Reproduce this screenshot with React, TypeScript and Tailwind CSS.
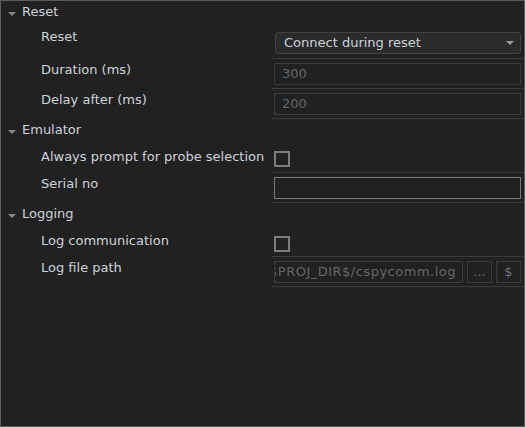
import React from "react";

const font = { fontFamily: '"DejaVu Sans", "Liberation Sans", sans-serif' };

function Header({ title, h }: { title: string; h: string }) {
  return (
    <div className={`flex ${h} items-start pt-[2px]`}>
      <div className="flex w-[21px] justify-start pl-[7px] pt-[9px]">
        <div className="h-0 w-0 border-x-[4px] border-t-[4px] border-x-transparent border-t-[#8a8a8a]" />
      </div>
      <span className="text-[13px] leading-[18px] text-[#ccd3da]">{title}</span>
    </div>
  );
}

function Row({
  label,
  h,
  lp,
  cp,
  children,
}: {
  label: string;
  h: string;
  lp: string;
  cp: string;
  children: React.ReactNode;
}) {
  return (
    <div className={`flex ${h}`}>
      <div
        className={`w-[270px] shrink-0 whitespace-nowrap pl-[40px] ${lp} text-[13px] leading-[18px] text-[#ccd3da]`}
      >
        {label}
      </div>
      <div className={`flex-1 border-b border-[#3a3a3a] ${cp} pl-[3px] pr-[3px]`}>
        {children}
      </div>
    </div>
  );
}

function DisabledInput({ value }: { value: string }) {
  return (
    <div className="flex h-[22px] items-center border border-[#3a3a3a] bg-[#212121] pl-[7px] text-[13px] text-[#676767]">
      {value}
    </div>
  );
}

function Checkbox() {
  return <div className="h-[16px] w-[16px] border-[2px] border-[#7d7d7d]" />;
}

export default function App() {
  return (
    <div
      style={font}
      className="h-[427px] w-[525px] overflow-hidden border border-[#5c5c5c] bg-[#212121]"
    >
      <Header title="Reset" h="h-[28px]" />
      <Row label="Reset" h="h-[30px]" lp="-mt-[1px]" cp="pt-[3px]">
        <div className="ml-[1px] flex h-[22px] items-center justify-between rounded-[3px] border border-[#444444] bg-[#2b2b2b] pl-[8px] pr-[6px] text-[13px] text-[#ccd3da]">
          <span>Connect during reset</span>
          <div className="h-0 w-0 border-x-[4px] border-t-[4px] border-x-transparent border-t-[#9a9a9a]" />
        </div>
      </Row>
      <Row label="Duration (ms)" h="h-[30px]" lp="pt-[2px]" cp="pt-[4px]">
        <DisabledInput value="300" />
      </Row>
      <Row label="Delay after (ms)" h="h-[30px]" lp="pt-[2px]" cp="pt-[4px]">
        <DisabledInput value="200" />
      </Row>
      <Header title="Emulator" h="h-[28px]" />
      <Row label="Always prompt for probe selection" h="h-[26px]" lp="pt-[1px]" cp="pt-[4px]">
        <Checkbox />
      </Row>
      <Row label="Serial no" h="h-[30px]" lp="pt-[2px]" cp="pt-[4px]">
        <div className="h-[22px] border border-[#7a7a7a] bg-[#212121]" />
      </Row>
      <Header title="Logging" h="h-[29px]" />
      <Row label="Log communication" h="h-[25px]" lp="pt-[0px]" cp="pt-[4px]">
        <Checkbox />
      </Row>
      <Row label="Log file path" h="h-[30px]" lp="pt-[2px]" cp="pt-[4px]">
        <div className="flex gap-[4px]">
          <div className="flex h-[22px] w-[189px] items-center justify-end overflow-hidden whitespace-nowrap border border-[#3a3a3a] bg-[#212121] pr-[6px] text-[13px] tracking-[0.5px] text-[#676767]">
            <span className="shrink-0">$PROJ_DIR$/cspycomm.log</span>
          </div>
          <div className="flex h-[22px] w-[25px] items-center justify-center border border-[#3a3a3a] text-[13px] text-[#6d6d6d]">
            ...
          </div>
          <div className="flex h-[22px] w-[25px] items-center justify-center border border-[#3a3a3a] text-[13px] text-[#6b737c]">
            $
          </div>
        </div>
      </Row>
    </div>
  );
}
